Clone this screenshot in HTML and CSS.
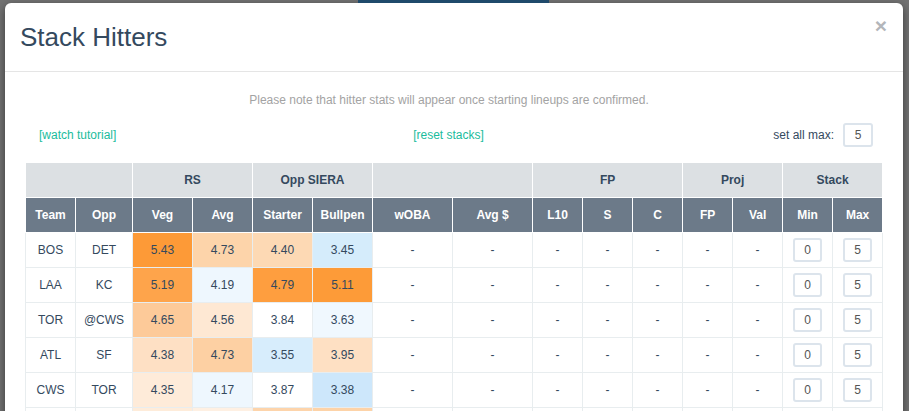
FILE: index.html
```html
<!DOCTYPE html>
<html>
<head>
<meta charset="utf-8">
<link rel="stylesheet" href="styles.css">
</head>
<body>
<div class="page-top"><div class="ghost-btn"></div></div>
<div class="modal">
  <div class="modal-header">
    <h4 class="modal-title">Stack Hitters</h4>
    <button class="close" type="button">&times;</button>
  </div>
  <div class="modal-body">
    <p class="note">Please note that hitter stats will appear once starting lineups are confirmed.</p>
    <div class="controls">
      <a class="link left">[watch tutorial]</a>
      <a class="link mid">[reset stacks]</a>
      <div class="setmax"><span>set all max:</span><input class="num big" value="5"></div>
    </div>
    <table class="stack">
      <colgroup>
        <col class="w50"><col class="w57"><col class="w60"><col class="w60"><col class="w60"><col class="w60">
        <col class="w80"><col class="w80"><col class="w50"><col class="w50"><col class="w50"><col class="w50"><col class="w50"><col class="w50"><col class="w50">
      </colgroup>
      <thead>
        <tr class="group">
          <th colspan="2"></th><th colspan="2">RS</th><th colspan="2">Opp SIERA</th><th colspan="2"></th><th colspan="3">FP</th><th colspan="2">Proj</th><th colspan="2">Stack</th>
        </tr>
        <tr class="cols">
          <th>Team</th><th>Opp</th><th>Veg</th><th>Avg</th><th>Starter</th><th>Bullpen</th><th>wOBA</th><th>Avg $</th><th>L10</th><th>S</th><th>C</th><th>FP</th><th>Val</th><th>Min</th><th>Max</th>
        </tr>
      </thead>
      <tbody>
        <tr><td>BOS</td><td>DET</td><td style="background:#fd9a37">5.43</td><td style="background:#fdd4aa">4.73</td><td style="background:#fdd9b4">4.40</td><td style="background:#d5ecfb">3.45</td><td>-</td><td>-</td><td>-</td><td>-</td><td>-</td><td>-</td><td>-</td><td><input class="num" value="0"></td><td><input class="num" value="5"></td></tr>
        <tr><td>LAA</td><td>KC</td><td style="background:#fea44b">5.19</td><td style="background:#eef7fe">4.19</td><td style="background:#fe9e3f">4.79</td><td style="background:#fd9b38">5.11</td><td>-</td><td>-</td><td>-</td><td>-</td><td>-</td><td>-</td><td>-</td><td><input class="num" value="0"></td><td><input class="num" value="5"></td></tr>
        <tr><td>TOR</td><td>@CWS</td><td style="background:#fdca99">4.65</td><td style="background:#fee8d3">4.56</td><td style="background:#ffffff">3.84</td><td style="background:#f0f8fe">3.63</td><td>-</td><td>-</td><td>-</td><td>-</td><td>-</td><td>-</td><td>-</td><td><input class="num" value="0"></td><td><input class="num" value="5"></td></tr>
        <tr><td>ATL</td><td>SF</td><td style="background:#fee0c4">4.38</td><td style="background:#fdd0a3">4.73</td><td style="background:#d7edfc">3.55</td><td style="background:#fee0c3">3.95</td><td>-</td><td>-</td><td>-</td><td>-</td><td>-</td><td>-</td><td>-</td><td><input class="num" value="0"></td><td><input class="num" value="5"></td></tr>
        <tr><td>CWS</td><td>TOR</td><td style="background:#feebd9">4.35</td><td style="background:#eef7fe">4.17</td><td style="background:#ffffff">3.87</td><td style="background:#cde7fb">3.38</td><td>-</td><td>-</td><td>-</td><td>-</td><td>-</td><td>-</td><td>-</td><td><input class="num" value="0"></td><td><input class="num" value="5"></td></tr>
        <tr><td></td><td></td><td style="background:#feecda"></td><td style="background:#fef0e3"></td><td style="background:#fdd4ab"></td><td style="background:#fdd3a8"></td><td></td><td></td><td></td><td></td><td></td><td></td><td></td><td></td><td></td></tr>
      </tbody>
    </table>
  </div>
</div>
</body>
</html>
```

FILE: styles.css
```css
html, body {
  margin: 0;
  padding: 0;
}
body {
  background: #727272;
  height: 411px;
  overflow: hidden;
  font-family: "Liberation Sans", Arial, sans-serif;
  color: #34495e;
}
.page-top {
  height: 3px;
  display: flex;
  justify-content: center;
}
.ghost-btn {
  width: 191px;
  height: 3px;
  margin-left: -2px;
  background: #1f4a6b;
}
.modal {
  margin: 0 6px 0 5px;
  background: #fff;
  border-radius: 6px 6px 0 0;
  box-shadow: 0 3px 9px rgba(0,0,0,0.5);
  height: 420px;
}
.modal-header {
  display: flex;
  justify-content: space-between;
  align-items: flex-start;
  padding: 19px 16px 19px 15px;
  border-bottom: 1px solid #e5e5e5;
}
.modal-title {
  margin: 0;
  font-size: 26px;
  font-weight: normal;
  line-height: 30px;
  color: #34495e;
}
.close {
  border: 0;
  background: none;
  padding: 0;
  margin-top: -11px;
  font-family: "Liberation Sans", Arial, sans-serif;
  font-size: 21px;
  font-weight: bold;
  line-height: 30px;
  color: #b3b6ba;
}
.modal-body {
  padding: 20px 20px 0 20px;
}
.note {
  margin: 0;
  padding-right: 10px;
  text-align: center;
  font-size: 12px;
  line-height: 17px;
  color: #a3a3a3;
}
.controls {
  margin-top: 14px;
  height: 24px;
  display: grid;
  grid-template-columns: 1fr 1fr 1fr;
  align-items: center;
  font-size: 12px;
}
.link {
  color: #1abc9c;
  text-decoration: none;
}
.link.left {
  padding-left: 14px;
}
.link.mid {
  text-align: center;
  padding-right: 11px;
}
.setmax {
  display: flex;
  justify-content: flex-end;
  align-items: center;
  gap: 9px;
  padding-right: 10px;
  color: #34495e;
}
.num {
  box-sizing: border-box;
  width: 29px;
  height: 24px;
  border: 2px solid #dce4ec;
  border-radius: 3px;
  padding: 0;
  text-align: center;
  font-family: "Liberation Sans", Arial, sans-serif;
  font-size: 12px;
  color: #555;
  background: #fff;
}
.num.big {
  width: 30px;
}
.stack {
  margin-top: 15px;
  border-collapse: collapse;
  table-layout: fixed;
  width: 858px;
  font-size: 12px;
}
.w50 { width: 50px; }
.w57 { width: 57px; }
.w60 { width: 60px; }
.w80 { width: 80px; }
.stack th {
  border: 1px solid #fff;
  text-align: center;
  font-weight: bold;
  padding: 0;
}
.stack .group th {
  background: #dce0e3;
  color: #34495e;
  height: 34px;
}
.stack .cols th {
  background: #6c7a89;
  color: #fff;
  height: 34px;
}
.stack td {
  border: 1px solid #e8edef;
  text-align: center;
  height: 34px;
  padding: 0;
  color: #34495e;
}
.stack td .num {
  vertical-align: middle;
}
```
